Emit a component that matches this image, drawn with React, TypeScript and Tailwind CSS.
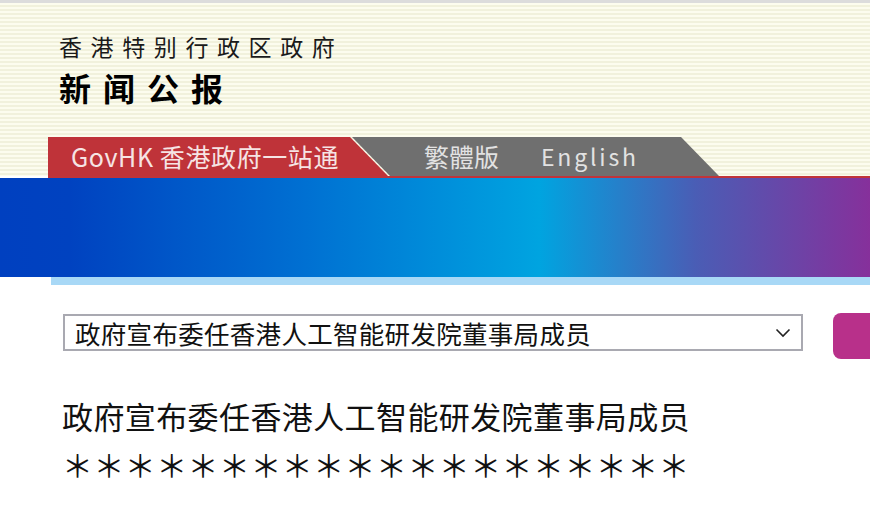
import React from "react";

const cjk = { fontFamily: '"Noto Sans CJK SC", "Noto Sans", sans-serif' };

export default function App() {
  return (
    <div className="w-[870px] h-[506px] overflow-hidden bg-white relative" style={cjk}>
      <div className="h-[3px] bg-[#dcdcdc]" />
      <div className="h-[173px] flex flex-col bg-[repeating-linear-gradient(to_bottom,#fcfcee_0px,#fcfcee_2px,#f1f1dc_2px,#f1f1dc_4px)]">
        <div className="pl-[59px] pt-[30px] text-[23px] leading-[26px] tracking-[8.6px] text-[#1a1a1a]">
          香港特别行政区政府
        </div>
        <div className="pl-[59px] pt-[11px] text-[32px] leading-[34px] font-bold tracking-[12px] text-black">
          新闻公报
        </div>
        <div className="mt-auto ml-[48px] flex h-[39px]">
          <div className="shrink-0 w-[340px] h-full bg-[#bf3339] [clip-path:polygon(0_0,302px_0,340px_100%,0_100%)] flex items-center pl-[23px] text-[25px] text-[#f6e4e4] tracking-[0.6px] leading-none">
            GovHK 香港政府一站通
          </div>
          <div className="shrink-0 -ml-[36px] w-[367px] h-full bg-[#6f6f6f] [clip-path:polygon(0_0,329px_0,367px_100%,38px_100%)] flex items-center leading-none text-[#e2e2e2]">
            <span className="ml-[72px] text-[25px]">繁體版</span>
            <span className="ml-[42px] text-[23px] tracking-[2.8px]">English</span>
          </div>
        </div>
      </div>
      <div className="ml-[48px] h-[2px] bg-[#c0343a]" />
      <div className="h-[99px] bg-[linear-gradient(to_right,#0040c0_0%,#0042c0_8%,#0070d2_35%,#00a4e0_62%,#4a5db5_80%,#86309b_100%)]" />
      <div className="ml-[51px] h-[8px] bg-[#a8d8f6]" />
      <div className="flex items-start mt-[29px]">
        <div className="shrink-0 ml-[63px] w-[740px] h-[37px] border-2 border-[#a9a9b1] flex items-center pl-[10px] pr-[10px]">
          <span className="text-[25.5px] leading-none text-[#111] tracking-[0.3px]">
            政府宣布委任香港人工智能研发院董事局成员
          </span>
          <svg className="ml-auto" width="16" height="10" viewBox="0 0 16 10">
            <path d="M1.5 1.5 L8 8 L14.5 1.5" stroke="#222" strokeWidth="1.6" fill="none" />
          </svg>
        </div>
        <div className="shrink-0 ml-[30px] -mt-[1px] w-[50px] h-[46px] rounded-lg bg-[#b8308a]" />
      </div>
      <div className="ml-[62px] mt-[40px] text-[31px] leading-[34px] text-[#111] tracking-[0.4px]">
        政府宣布委任香港人工智能研发院董事局成员
      </div>
      <div className="ml-[62px] mt-[14px] text-[31px] leading-[34px] text-[#111] tracking-[0.4px]">
        ＊＊＊＊＊＊＊＊＊＊＊＊＊＊＊＊＊＊＊＊
      </div>
    </div>
  );
}
